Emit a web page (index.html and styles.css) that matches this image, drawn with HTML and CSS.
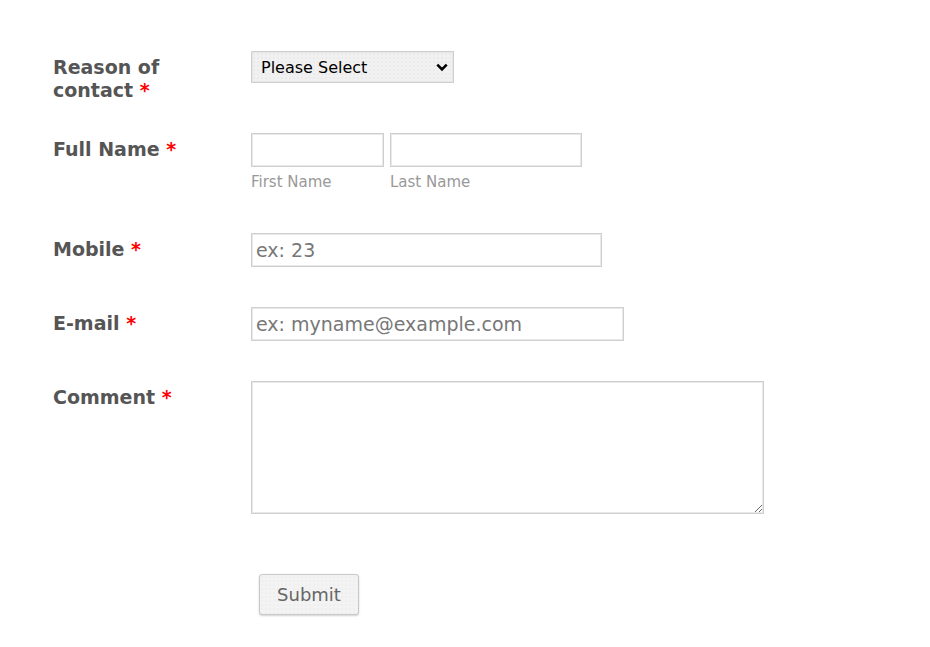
FILE: index.html
```html
<!DOCTYPE html>
<html lang="en">
<head>
<meta charset="utf-8">
<title>Contact form</title>
<link rel="stylesheet" href="styles.css">
</head>
<body>
<form class="form">
  <div class="row row-first">
    <label class="label">Reason of<br>contact <span class="req">*</span></label>
    <div class="field">
      <div class="select-wrap">
        <select class="select">
          <option>Please Select</option>
        </select>
        <svg class="chev" width="12" height="9" viewBox="0 0 12 9"><path d="M1.3 1.6 L6 6.3 L10.7 1.6" fill="none" stroke="#000" stroke-width="2.6"/></svg>
      </div>
    </div>
  </div>
  <div class="row">
    <label class="label">Full Name <span class="req">*</span></label>
    <div class="field name-field">
      <div class="name-part">
        <input class="input input-first" type="text">
        <span class="sublabel">First Name</span>
      </div>
      <div class="name-part">
        <input class="input input-last" type="text">
        <span class="sublabel">Last Name</span>
      </div>
    </div>
  </div>
  <div class="row">
    <label class="label">Mobile <span class="req">*</span></label>
    <div class="field">
      <input class="input input-mobile" type="text" placeholder="ex: 23">
    </div>
  </div>
  <div class="row">
    <label class="label">E-mail <span class="req">*</span></label>
    <div class="field">
      <input class="input input-email" type="text" placeholder="ex: myname@example.com">
    </div>
  </div>
  <div class="row">
    <label class="label">Comment <span class="req">*</span></label>
    <div class="field">
      <textarea class="input textarea"></textarea>
    </div>
  </div>
  <div class="row row-submit">
    <div class="label"></div>
    <div class="field">
      <button class="submit" type="button">Submit</button>
    </div>
  </div>
</form>
</body>
</html>
```

FILE: styles.css
```css
html, body {
  margin: 0;
  padding: 0;
  background: #fff;
}

body {
  font-family: "DejaVu Sans", Verdana, sans-serif;
  color: #555;
}

.form {
  display: flex;
  flex-direction: column;
  padding: 51px 0 0 53px;
}

.row {
  display: grid;
  grid-template-columns: 198px 1fr;
  padding-bottom: 40px;
}

.row-first {
  padding-bottom: 31px;
}

.row-submit {
  padding-top: 20px;
}

.row-submit .field {
  padding-left: 8px;
}

.label {
  font-size: 19px;
  font-weight: bold;
  line-height: 23px;
  color: #555;
  padding-top: 5px;
}

.req {
  color: #f00;
  margin-left: 0;
}

.field {
  display: flex;
  align-items: flex-start;
}

.select-wrap {
  position: relative;
  width: 203px;
  height: 32px;
}

.select {
  appearance: none;
  -webkit-appearance: none;
  width: 203px;
  height: 32px;
  box-sizing: border-box;
  border: 1px solid #cfcfcf;
  box-shadow: inset 0 0 0 1px #e6e6e6;
  background-color: #f1f1f1;
  background-image: radial-gradient(#e4e4e4 0.6px, transparent 0.8px);
  background-size: 4px 4px;
  font-family: "DejaVu Sans", Verdana, sans-serif;
  font-size: 16px;
  color: #000;
  padding: 0 0 0 9px;
  margin: 0;
  border-radius: 0;
}

.chev {
  position: absolute;
  right: 6px;
  top: 12px;
  background: #f1f1f1;
  pointer-events: none;
}

.input {
  box-sizing: border-box;
  height: 34px;
  border: 1px solid #cfcfcf;
  box-shadow: inset 0 0 0 1px #e9e9e9;
  background: #fff;
  font-family: "DejaVu Sans", Verdana, sans-serif;
  font-size: 19px;
  color: #555;
  padding: 0 4px;
  margin: 0;
  border-radius: 0;
  outline: none;
}

.input::placeholder {
  color: #777;
}

.name-field {
  gap: 6px;
}

.name-part {
  display: flex;
  flex-direction: column;
}

.input-first {
  width: 133px;
}

.input-last {
  width: 192px;
}

.sublabel {
  font-size: 15px;
  line-height: 21px;
  color: #999;
  margin-top: 5px;
}

.input-mobile {
  width: 351px;
}

.input-email {
  width: 373px;
}

.textarea {
  width: 513px;
  height: 133px;
  resize: vertical;
  display: block;
}

.submit {
  width: 100px;
  height: 41px;
  box-sizing: border-box;
  border: 1px solid #c8c8c8;
  border-radius: 3px;
  background-color: #f3f3f3;
  background-image: radial-gradient(#e8e8e8 0.6px, transparent 0.8px);
  background-size: 4px 4px;
  box-shadow: 0 1px 2px rgba(0, 0, 0, 0.18);
  font-family: "DejaVu Sans", Verdana, sans-serif;
  font-size: 18px;
  color: #666;
  padding: 0;
}
```
